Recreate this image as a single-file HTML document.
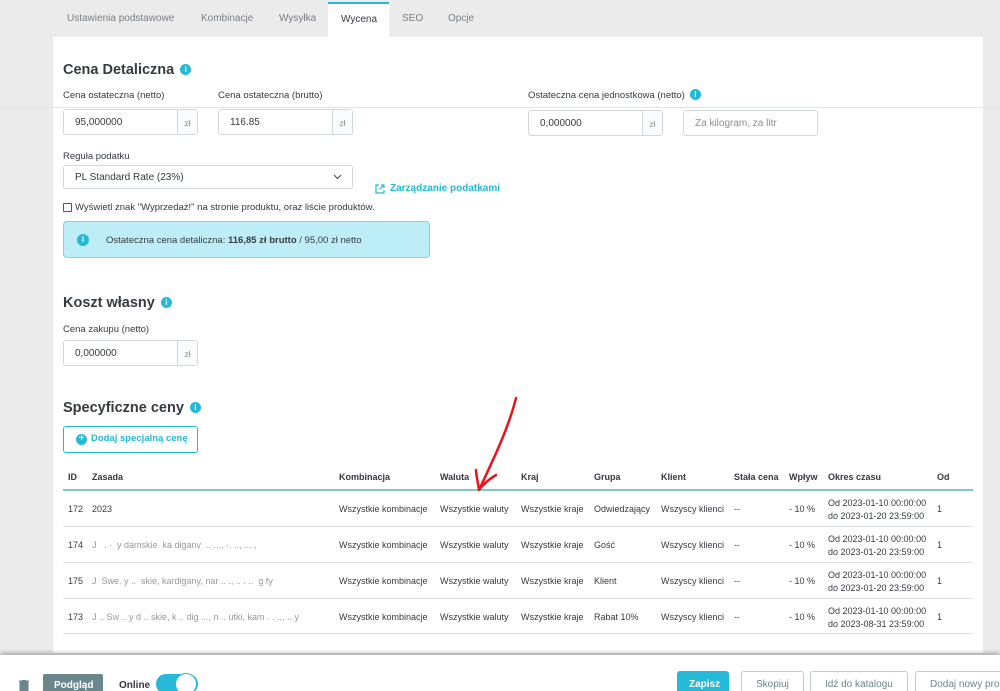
<!DOCTYPE html>
<html><head><meta charset="utf-8"><style>
*{margin:0;padding:0;box-sizing:border-box}
html,body{width:1000px;height:691px;overflow:hidden}
body{background:#ebebeb;font-family:"Liberation Sans",sans-serif;color:#363a41;position:relative;font-size:10px}
#w{position:absolute;left:0;top:0;width:1000px;height:691px;overflow:hidden}
.a{position:absolute;white-space:nowrap}
.tab{position:absolute;top:13px;font-size:10px;color:#7a7f85}
.panel{position:absolute;left:53px;top:37px;width:930px;height:616px;background:#fff}
h2{position:absolute;font-size:14.5px;font-weight:bold;color:#363a41;white-space:nowrap}
.info{display:inline-block;width:11px;height:11px;border-radius:50%;background:#25b9d7;vertical-align:middle;margin-left:6px;position:relative;top:-1px;color:#fff;font-size:8px;line-height:11px;text-align:center;font-weight:bold}
.lbl{position:absolute;font-size:9.5px;color:#363a41;white-space:nowrap}
.inp{position:absolute;height:26px;border:1px solid #d3d8db;border-radius:3px;background:#fff;font-size:10px;color:#363a41;padding:7px 11px;white-space:nowrap}
.add{position:absolute;right:0;top:0;bottom:0;width:20px;border-left:1px solid #d3d8db;background:#fafbfc;color:#8a8f95;font-size:8.5px;text-align:center;padding-top:8px}
.th{position:absolute;top:472px;font-size:9px;font-weight:bold;color:#363a41;white-space:nowrap}
.td{position:absolute;font-size:9px;color:#363a41;white-space:nowrap}
.rl{position:absolute;left:63px;width:910px;height:1px;background:#dfe3e6}
.btn{position:absolute;top:671px;height:26px;border:1px solid #bbcdd2;border-radius:3px;background:#fff;color:#6c868e;font-size:10px;padding:7px 14px;white-space:nowrap}
</style></head><body><div id="w">
<div class="tab" style="left:67px">Ustawienia podstawowe</div>
<div class="tab" style="left:201px">Kombinacje</div>
<div class="tab" style="left:279px">Wysyłka</div>
<div class="a" style="left:328px;top:2px;width:61px;height:36px;background:#fff;border-top:2px solid #25b9d7"></div>
<div class="tab" style="left:341px;top:14px;color:#363a41">Wycena</div>
<div class="tab" style="left:402px">SEO</div>
<div class="tab" style="left:448px">Opcje</div>
<div class="panel"></div>
<div class="a" style="left:0;top:107px;width:1000px;height:1px;background:#e3e3e3"></div>

<h2 style="left:63px;top:62px">Cena Detaliczna<span class="info">i</span></h2>
<div class="lbl" style="left:63px;top:90px">Cena ostateczna (netto)</div>
<div class="lbl" style="left:218px;top:90px">Cena ostateczna (brutto)</div>
<div class="lbl" style="left:528px;top:90px">Ostateczna cena jednostkowa (netto)<span class="info" style="margin-left:5px">i</span></div>
<div class="inp" style="left:63px;top:109px;width:135px">95,000000<div class="add">zł</div></div>
<div class="inp" style="left:218px;top:109px;width:135px">116.85<div class="add">zł</div></div>
<div class="inp" style="left:528px;top:110px;width:135px">0,000000<div class="add">zł</div></div>
<div class="inp" style="left:683px;top:110px;width:135px;color:#8a8f95">Za kilogram, za litr</div>
<div class="lbl" style="left:63px;top:151px">Reguła podatku</div>
<div class="inp" style="left:63px;top:165px;width:290px;height:24px;padding-top:6px">PL Standard Rate (23%)
<svg class="a" style="right:10px;top:8px" width="9" height="6" viewBox="0 0 9 6"><path d="M1 1l3.5 3.5L8 1" stroke="#555" stroke-width="1.2" fill="none"/></svg></div>
<svg class="a" style="left:375px;top:184px" width="10" height="10" viewBox="0 0 10 10"><path d="M4 1H1v8h8V6M6 1h3v3M9 1L4.5 5.5" stroke="#25b9d7" stroke-width="1.2" fill="none"/></svg>
<div class="a" style="left:390px;top:183px;font-size:10px;font-weight:bold;color:#25b9d7">Zarządzanie podatkami</div>
<div class="a" style="left:63px;top:203px;width:9px;height:9px;border:1px solid #555;border-radius:1px"></div>
<div class="a" style="left:75px;top:202px;font-size:9.5px">Wyświetl znak "Wyprzedaż!" na stronie produktu, oraz liście produktów.</div>
<div class="a" style="left:63px;top:221px;width:367px;height:37px;background:#bdeef7;border:1px solid #7fd3e4;border-radius:4px"></div>
<div class="a" style="left:77px;top:234px;width:12px;height:12px;border-radius:50%;background:#25b9d7;color:#fff;font-size:8px;line-height:12px;text-align:center;font-weight:bold">i</div>
<div class="a" style="left:106px;top:235px;font-size:9.5px">Ostateczna cena detaliczna: <b>116,85 zł brutto</b> / 95,00 zł netto</div>

<h2 style="left:63px;top:295px">Koszt własny<span class="info">i</span></h2>
<div class="lbl" style="left:63px;top:324px">Cena zakupu (netto)</div>
<div class="inp" style="left:63px;top:340px;width:135px">0,000000<div class="add">zł</div></div>

<h2 style="left:63px;top:400px">Specyficzne ceny<span class="info">i</span></h2>
<div class="a" style="left:63px;top:426px;width:135px;height:27px;border:1px solid #25b9d7;border-radius:3px"></div>
<div class="a" style="left:76px;top:434px;width:11px;height:11px;border-radius:50%;background:#25b9d7;color:#fff;font-size:10px;line-height:10px;text-align:center;font-weight:bold">+</div>
<div class="a" style="left:91px;top:433px;font-size:9.5px;font-weight:bold;color:#25b9d7">Dodaj specjalną cenę</div>

<div class="th" style="left:68px">ID</div><div class="th" style="left:92px">Zasada</div><div class="th" style="left:339px">Kombinacja</div><div class="th" style="left:440px">Waluta</div><div class="th" style="left:521px">Kraj</div><div class="th" style="left:594px">Grupa</div><div class="th" style="left:661px">Klient</div><div class="th" style="left:734px">Stała cena</div><div class="th" style="left:789px">Wpływ</div><div class="th" style="left:828px">Okres czasu</div><div class="th" style="left:937px">Od</div>
<div class="a" style="left:63px;top:489px;width:910px;height:2px;background:#7cc5cd"></div>

<div class="td" style="left:68px;top:504px">172</div><div class="td" style="left:92px;top:504px">2023</div>
<div class="td" style="left:68px;top:540px">174</div><div class="td" style="left:92px;top:540px;color:#999">J&nbsp;&nbsp; . ·&nbsp; y damskie&nbsp; ka diganv&nbsp; .. ..., ·. .., ... ,</div>
<div class="td" style="left:68px;top:576px">175</div><div class="td" style="left:92px;top:576px;color:#999">J&nbsp; Swe. y ..&nbsp; skie, kardigany, nar .. ., .. . ..&nbsp; g fy</div>
<div class="td" style="left:68px;top:612px">173</div><div class="td" style="left:92px;top:612px;color:#999">J .. Sw .. y d .. skie, k .. dig ..., n .. utki, kam . . .., .. y</div>
<div class="rl" style="top:526px"></div><div class="rl" style="top:562px"></div><div class="rl" style="top:598px"></div><div class="rl" style="top:633px"></div>

<div class="td" style="left:339px;top:504px">Wszystkie kombinacje</div><div class="td" style="left:440px;top:504px">Wszystkie waluty</div><div class="td" style="left:521px;top:504px">Wszystkie kraje</div><div class="td" style="left:594px;top:504px">Odwiedzający</div><div class="td" style="left:661px;top:504px">Wszyscy klienci</div><div class="td" style="left:734px;top:504px">--</div><div class="td" style="left:789px;top:504px">- 10 %</div><div class="td" style="left:828px;top:497px;line-height:13px">Od 2023-01-10 00:00:00<br>do 2023-01-20 23:59:00</div><div class="td" style="left:937px;top:504px">1</div>
<div class="td" style="left:339px;top:540px">Wszystkie kombinacje</div><div class="td" style="left:440px;top:540px">Wszystkie waluty</div><div class="td" style="left:521px;top:540px">Wszystkie kraje</div><div class="td" style="left:594px;top:540px">Gość</div><div class="td" style="left:661px;top:540px">Wszyscy klienci</div><div class="td" style="left:734px;top:540px">--</div><div class="td" style="left:789px;top:540px">- 10 %</div><div class="td" style="left:828px;top:533px;line-height:13px">Od 2023-01-10 00:00:00<br>do 2023-01-20 23:59:00</div><div class="td" style="left:937px;top:540px">1</div>
<div class="td" style="left:339px;top:576px">Wszystkie kombinacje</div><div class="td" style="left:440px;top:576px">Wszystkie waluty</div><div class="td" style="left:521px;top:576px">Wszystkie kraje</div><div class="td" style="left:594px;top:576px">Klient</div><div class="td" style="left:661px;top:576px">Wszyscy klienci</div><div class="td" style="left:734px;top:576px">--</div><div class="td" style="left:789px;top:576px">- 10 %</div><div class="td" style="left:828px;top:569px;line-height:13px">Od 2023-01-10 00:00:00<br>do 2023-01-20 23:59:00</div><div class="td" style="left:937px;top:576px">1</div>
<div class="td" style="left:339px;top:612px">Wszystkie kombinacje</div><div class="td" style="left:440px;top:612px">Wszystkie waluty</div><div class="td" style="left:521px;top:612px">Wszystkie kraje</div><div class="td" style="left:594px;top:612px">Rabat 10%</div><div class="td" style="left:661px;top:612px">Wszyscy klienci</div><div class="td" style="left:734px;top:612px">--</div><div class="td" style="left:789px;top:612px">- 10 %</div><div class="td" style="left:828px;top:605px;line-height:13px">Od 2023-01-10 00:00:00<br>do 2023-08-31 23:59:00</div><div class="td" style="left:937px;top:612px">1</div>

<svg class="a" style="left:460px;top:390px" width="70" height="110" viewBox="0 0 70 110"><path d="M56 8C48 40 32 72 19 100M19 100C18 92 16 85 16 80M19 100C24 93 31 88 36 85" stroke="#e8141c" stroke-width="2.5" fill="none" stroke-linecap="round"/></svg>

<div class="a" style="left:0;top:655px;width:1000px;height:36px;background:#fff;box-shadow:0 -2px 4px rgba(0,0,0,.3)"></div>
<svg class="a" style="left:19px;top:680px" width="10" height="11" viewBox="0 0 10 11"><path d="M0 1h10M3 0h4M1 2h8v9H1z" fill="#6c868e" stroke="#6c868e"/></svg>
<div class="a" style="left:43px;top:674px;width:60px;height:20px;background:#6c868e;border-radius:2px;color:#fff;font-size:10px;font-weight:bold;padding:6px 0 0 11px">Podgląd</div>
<div class="a" style="left:119px;top:680px;font-size:10px;font-weight:bold">Online</div>
<div class="a" style="left:156px;top:674px;width:42px;height:20px;border-radius:10px;background:#25b9d7"></div>
<div class="a" style="left:175px;top:673px;width:22px;height:22px;border-radius:50%;background:#fff;border:1px solid #25b9d7"></div>
<div class="a" style="left:677px;top:671px;width:52px;height:26px;background:#25b9d7;border-radius:3px;color:#fff;font-size:10px;font-weight:bold;padding:8px 0 0 12px">Zapisz</div>
<div class="btn" style="left:741px">Skopiuj</div>
<div class="btn" style="left:810px">Idź do katalogu</div>
<div class="btn" style="left:915px;width:140px">Dodaj nowy produkt</div>
</div></body></html>
